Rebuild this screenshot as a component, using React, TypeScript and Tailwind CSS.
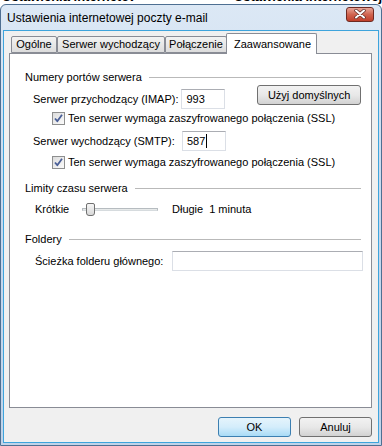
import React from 'react';

const font = { fontFamily: '"Liberation Sans", Arial, sans-serif' };

const CheckBox: React.FC = () => (
    <span className="w-[13px] h-[13px] border border-[#8e8f8f] bg-gradient-to-br from-[#dcdcdc] to-[#fbfbfb] flex items-center justify-center shrink-0">
        <svg width="11" height="11" viewBox="0 0 11 11">
            <path d="M2 5.5 L4.3 8.2 L9 1.8" fill="none" stroke="#4a5f97" strokeWidth="1.8" strokeLinejoin="round" />
        </svg>
    </span>
);

const GroupHeader: React.FC<{ title: string }> = ({ title }) => (
    <div className="h-[16px] flex items-center">
        <span className="whitespace-nowrap">{title}</span>
        <div className="flex-1 ml-[7px] h-px bg-[#b9b9b9]" />
    </div>
);

const TextBox: React.FC<{ value?: string; caret?: boolean; className?: string }> = ({ value, caret, className }) => (
    <div className={`h-[20px] bg-white border border-[#dbdfe6] border-t-[#abadb3] flex items-center pl-[4px] ${className ?? ''}`}>
        <span>{value}</span>
        {caret && <span className="w-px h-[14px] bg-black ml-px" />}
    </div>
);

const WinButton: React.FC<{ label: string; primary?: boolean; className?: string }> = ({ label, primary, className }) => (
    <button
        className={`h-[20px] rounded-[3px] border flex items-center justify-center whitespace-nowrap ${
            primary
                ? 'border-[#3c7fb1] bg-gradient-to-b from-[#e5f4fc] via-[#d4edfb] to-[#a9dbf6]'
                : 'border-[#707070] bg-gradient-to-b from-[#f2f2f2] via-[#e8e8e8] to-[#d2d2d2]'
        } ${className ?? ''}`}
    >
        {label}
    </button>
);

const Tab: React.FC<{ label: string; width: string; active?: boolean }> = ({ label, width, active }) =>
    active ? (
        <div className={`${width} h-[21px] -mb-px bg-white border border-b-0 border-[#898c95] rounded-t-[2px] flex items-center pl-[7px] relative z-10 -mx-px whitespace-nowrap`}>
            {label}
        </div>
    ) : (
        <div className={`${width} h-[17px] mt-[4px] bg-gradient-to-b from-[#f3f3f3] to-[#dcdcdc] border border-[#898c95] rounded-t-[2px] flex items-center justify-center whitespace-nowrap`}>
            {label}
        </div>
    );

export default function App() {
    return (
        <div className="w-[382px] h-[446px] flex flex-col bg-white overflow-hidden text-[11px] text-black" style={font}>
            {/* bits of the window behind */}
            <div className="h-[4px] overflow-hidden flex text-[13px] font-bold leading-[10px]">
                <span className="-mt-[8px] ml-[2px] w-[140px] whitespace-nowrap overflow-hidden">Ustawienia internetowej</span>
                <span className="-mt-[8px] ml-[100px] whitespace-nowrap">Ustawienia internetowej</span>
            </div>
            <div className="flex-1 flex flex-col border border-[#4e6f92] rounded-t-[6px] bg-gradient-to-b from-[#dce8f5] via-[#c5d8ee] to-[#c0d4ea] px-[2px] pb-[2px]">
                <div className="h-[25px] flex items-center justify-between pl-[4px] pr-[5px]">
                    <span className="text-[12px] mt-[1px]">Ustawienia internetowej poczty e-mail</span>
                    <div className="w-[28px] h-[15px] -mt-[7px] rounded-[3px] border border-[#6e2a22] bg-gradient-to-b from-[#e7a598] via-[#d0644f] to-[#c03e2a] flex items-center justify-center">
                        <svg width="12" height="10" viewBox="0 0 12 10">
                            <path d="M2 1.5 L10 8.5 M10 1.5 L2 8.5" stroke="#5a2a24" strokeWidth="3.4" strokeLinecap="round" />
                            <path d="M2 1.5 L10 8.5 M10 1.5 L2 8.5" stroke="#ffffff" strokeWidth="2" strokeLinecap="round" />
                        </svg>
                    </div>
                </div>
                <div className="flex-1 flex flex-col bg-[#f0f0f0] border border-[#3ea4dc] pl-[5px] pr-[6px] pt-[1px]">
                    <div className="flex items-end pl-[2px]">
                        <Tab label="Ogólne" width="w-[46px]" />
                        <Tab label="Serwer wychodzący" width="w-[108px]" />
                        <Tab label="Połączenie" width="w-[62px]" />
                        <Tab label="Zaawansowane" width="w-[91px]" active />
                    </div>
                    <div className="h-[355px] bg-white border border-[#898c95] pl-[15px] pr-[10px] pt-[15px] flex flex-col">
                        <GroupHeader title="Numery portów serwera" />
                        <div className="h-[24px] flex items-start pl-[8px]">
                            <span className="w-[149px] mt-[6px] whitespace-nowrap">Serwer przychodzący (IMAP):</span>
                            <TextBox value="993" className="w-[44px] mt-[4px]" />
                            <WinButton label="Użyj domyślnych" className="w-[104px] ml-[32px]" />
                        </div>
                        <div className="h-[18px] flex items-center gap-[3px] pl-[27px]">
                            <CheckBox />
                            <span>Ten serwer wymaga zaszyfrowanego połączenia (SSL)</span>
                        </div>
                        <div className="h-[24px] mt-[2px] flex items-center pl-[8px]">
                            <span className="w-[149px] whitespace-nowrap">Serwer wychodzący (SMTP):</span>
                            <TextBox value="587" caret className="w-[44px]" />
                        </div>
                        <div className="h-[18px] flex items-center gap-[3px] pl-[27px]">
                            <CheckBox />
                            <span>Ten serwer wymaga zaszyfrowanego połączenia (SSL)</span>
                        </div>
                        <div className="mt-[9px]">
                            <GroupHeader title="Limity czasu serwera" />
                        </div>
                        <div className="h-[20px] mt-[3px] flex items-center pl-[10px]">
                            <span className="w-[47px]">Krótkie</span>
                            <div className="w-[76px] h-[20px] relative flex items-center">
                                <div className="absolute left-0 right-0 top-[9px] h-[3px] bg-[#e7eaea] border border-[#b6bcc0] border-b-[#d6dbde]" />
                                <div className="relative ml-[4px] w-[9px] h-[13px] rounded-[2px] rounded-b-[3px] border border-[#707070] bg-gradient-to-b from-[#f6f6f6] to-[#d8d8d8]" />
                            </div>
                            <span className="ml-[14px]">Długie</span>
                            <span className="ml-[6px]">1 minuta</span>
                        </div>
                        <div className="mt-[12px]">
                            <GroupHeader title="Foldery" />
                        </div>
                        <div className="h-[20px] mt-[4px] flex items-center pl-[10px]">
                            <span className="w-[137px] whitespace-nowrap">Ścieżka folderu głównego:</span>
                            <TextBox className="flex-1 -mr-[2px] border-[#abadb3]" />
                        </div>
                    </div>
                    <div className="flex justify-end gap-[8px] mt-[9px]">
                        <WinButton label="OK" primary className="w-[73px]" />
                        <WinButton label="Anuluj" className="w-[73px]" />
                    </div>
                </div>
            </div>
        </div>
    );
}
